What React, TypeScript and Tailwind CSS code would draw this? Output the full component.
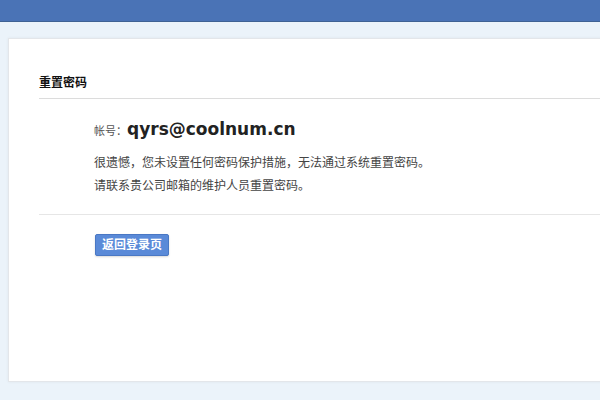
export default function App() {
  return (
    <div
      className="w-[600px] h-[400px] overflow-hidden bg-[#ebf3fa] flex flex-col"
      style={{ fontFamily: '"Liberation Sans", "Noto Sans CJK SC", sans-serif' }}
    >
      {/* top bar */}
      <div className="h-[22px] shrink-0 bg-[#4a73b6] border-b border-[#3f6294]" />

      {/* content panel */}
      <div className="mt-[16px] ml-[8px] w-[600px] h-[344px] bg-white border border-[#e3e6ea] shadow-[0_0_3px_rgba(0,0,0,0.06)] pl-[30px] pt-[37px]">
        <div className="h-[23px] border-b border-[#dcdcdc] text-[12px] font-bold text-[#111] leading-[14px]">
          重置密码
        </div>

        <div className="pl-[55px] pt-[20px]">
          <div className="flex items-baseline">
            <span className="text-[11px] text-[#555]">帐号：</span>
            <span className="text-[17px] font-bold text-[#222] leading-[20px] font-['DejaVu_Sans',sans-serif]">
              qyrs@coolnum.cn
            </span>
          </div>
          <div className="mt-[12px] text-[12px] leading-[23px] text-[#444]">
            <p>很遗憾，您未设置任何密码保护措施，无法通过系统重置密码。</p>
            <p>请联系贵公司邮箱的维护人员重置密码。</p>
          </div>
        </div>

        <div className="mt-[16px] border-t border-[#e6e6e6] pl-[56px] pt-[17px]">
          <button className="h-[22px] px-[6px] rounded-[2px] bg-[#5a8ad8] border border-[#4a78c4] text-[12px] font-bold text-white leading-[20px] shadow-[0_1px_2px_rgba(0,0,0,0.15)]">
            返回登录页
          </button>
        </div>
      </div>
    </div>
  );
}
